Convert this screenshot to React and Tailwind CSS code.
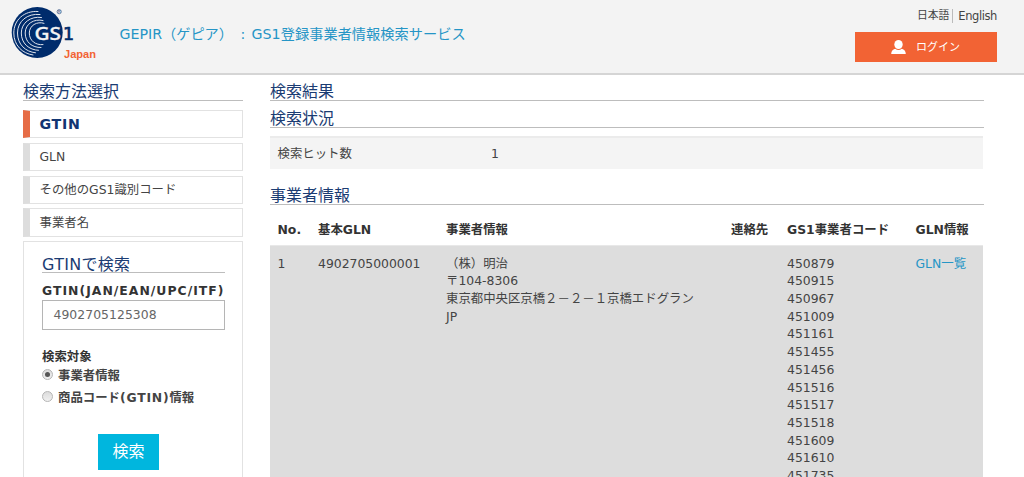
const menu = ["GTIN", "GLN", "その他のGS1識別コード", "事業者名"];

const codes = [
  "450879", "450915", "450967", "451009", "451161", "451455", "451456",
  "451516", "451517", "451518", "451609", "451610", "451735",
];

const columns =
  "grid grid-cols-[40.5px_128px_285px_56px_128.5px_1fr] pl-[7.5px]";

function Logo() {
  return (
    <svg className="mt-[5px] ml-[10px] h-[58px] w-[90px] shrink-0" viewBox="10 5 90 58">
      <circle cx="37.2" cy="32.5" r="25.5" fill="#002c6c" />
      <g fill="none" stroke="#dfe4ec" strokeWidth="1" strokeLinecap="round">
        <path d="M38 11.5C24 10.500 13.800 20 13.800 33C13.800 45 22 53.500 33 55" />
        <path d="M40 14.500C27 13 17.500 21.500 17.500 33C17.500 44.500 25.500 51.800 35.500 52.800" />
        <path d="M41.500 17.500C30.500 15.800 21.300 23 21.300 33C21.300 43.500 29 50 38.500 50.300" />
        <path d="M43 20.500C34 18.300 25.200 24 25.200 33C25.200 42 32 47.800 41 47.500" />
        <path d="M44 23.300C37 21 29.300 25.500 29.300 33C29.300 40.500 35.500 45.500 43 44.600" />
      </g>
      <path d="M37 25.500h22v15H35.500z" fill="#002c6c" />
      <text x="34.5" y="39.5" fontFamily="'Noto Sans', sans-serif" fontSize="18.5" fontWeight="500" fill="#f3f3f3" stroke="#f3f3f3" strokeWidth="0.3" textLength="26.5" lengthAdjust="spacingAndGlyphs">GS</text>
      <text x="63" y="39.5" fontFamily="'DejaVu Sans', sans-serif" fontSize="17.5" fill="#002c6c" stroke="#002c6c" strokeWidth="0.7">1</text>
      <circle cx="59.2" cy="11.7" r="2.1" fill="none" stroke="#5a7399" strokeWidth="0.9" />
      <text x="59.2" y="13" textAnchor="middle" fontFamily="'Liberation Sans', sans-serif" fontSize="3.5" fill="#002c6c">R</text>
      <text x="64" y="57.6" fontFamily="'Liberation Sans', sans-serif" fontSize="11" fontWeight="700" fill="#f26334" textLength="32" lengthAdjust="spacingAndGlyphs">Japan</text>
    </svg>
  );
}

function Heading({ children, className }) {
  return (
    <h2 className={`border-b border-[#bdbdbd] text-[16px] text-[#1b3c73] ${className}`}>
      {children}
    </h2>
  );
}

function Radio({ checked }) {
  return (
    <span className="mr-[5px] mb-[4px] flex size-[11px] items-center justify-center rounded-full border border-[#b5b5b5] bg-linear-to-b from-[#dcdcdc] to-[#f0f0f0]">
      {checked && <span className="size-[5px] rounded-full bg-[#555]" />}
    </span>
  );
}

export default function App() {
  return (
    <div className="flex h-[477px] w-[1024px] flex-col overflow-hidden bg-white font-['DejaVu_Sans','Noto_Sans_CJK_JP',sans-serif] text-[12.4px] text-[#444]">
      <header className="flex h-[75px] shrink-0 items-start border-b-2 border-[#d5d5d5] bg-[#f3f3f3]">
        <Logo />
        <h1 className="mt-[23px] ml-[19.5px] flex text-[14.2px] leading-[22px] whitespace-nowrap text-[#2595c6]">
          <span className="w-[116px]">GEPIR（ゲピア）</span>
          <span className="w-[16px] pl-[5px]">:</span>
          <span className="tracking-[0.05px]">GS1登録事業者情報検索サービス</span>
        </h1>
        <div className="mt-[9px] mr-[27px] ml-auto w-[142px]">
          <div className="flex h-[14px] items-center justify-end text-[10.8px] leading-[14px] whitespace-nowrap">
            <span className="mr-[3px]">日本語</span>
            <span className="border-l border-[#bbb] pl-[5px] text-[11.5px] tracking-[-0.4px]">English</span>
          </div>
          <button className="mt-[9px] flex h-[30px] w-full items-center bg-[#f26334] pl-[36px] text-[11px] text-white">
            <svg className="mr-[10px] h-[14px] w-[15px]" viewBox="0 0 15 14" fill="white">
              <ellipse cx="7.5" cy="4.5" rx="4.2" ry="4.5" />
              <path d="M0.200 14C0.200 11 1.800 9.500 4.200 8.700Q7.500 11.300 10.800 8.700C13.200 9.500 14.800 11 14.800 14Z" />
            </svg>
            <span className="pt-[3px]">ログイン</span>
          </button>
        </div>
      </header>

      <div className="flex min-h-0 flex-1">
        <aside className="ml-[23px] flex w-[220px] shrink-0 flex-col">
          <Heading className="mt-[5px] h-[21px] leading-[24px]">検索方法選択</Heading>
          <ul className="mt-[9px] flex flex-col gap-[4.6px]">
            {menu.map((name, i) => (
              <li
                key={name}
                className={`flex h-[28.2px] items-center border border-l-[7px] pl-[9.5px] ${
                  i === 0
                    ? "border-y-[#e2e2e2] border-r-[#e2e2e2] border-l-[#e66c46] pt-px text-[14.2px] font-bold tracking-[0.7px] text-[#123572]"
                    : "border-[#e2e2e2] border-l-[#ddd] pt-px"
                }`}
              >
                {name}
              </li>
            ))}
          </ul>
          <form className="mt-[4px] flex-1 border border-b-0 border-[#e2e2e2] pr-[17px] pl-[18px]">
            <Heading className="mt-[11px] h-[20px] leading-[23px] tracking-[0.3px]">GTINで検索</Heading>
            <div className="mt-[9px] h-[18px] text-[12.4px] leading-[17px] font-bold tracking-[1.02px] whitespace-nowrap text-[#333]">GTIN(JAN/EAN/UPC/ITF)</div>
            <div className="flex h-[30px] items-center border border-[#b5b5b5] pt-[2px] pl-[10.5px] tracking-[0.05px] text-[#666]">4902705125308</div>
            <div className="mt-[17px] leading-[20px] font-bold text-[#333]">検索対象</div>
            <label className="-mt-px flex h-[20px] items-center pt-[2px] font-bold"><Radio checked />事業者情報</label>
            <label className="mt-px flex h-[21px] items-center pt-[2px] font-bold"><Radio /><span>商品コード<span className="tracking-[0.8px]">(GTIN)</span>情報</span></label>
            <button className="mt-[26px] ml-[56px] block h-[36px] w-[61px] bg-[#00b6de] pt-px text-[16px] text-white">検索</button>
          </form>
        </aside>

        <main className="ml-[27px] flex w-[714px] shrink-0 flex-col">
          <Heading className="mt-[5px] h-[21px] leading-[24px]">検索結果</Heading>
          <Heading className="mt-[6px] h-[21px] leading-[24px]">検索状況</Heading>
          <div className="mt-[8px] mr-px flex h-[33px] shrink-0 items-center border-t-2 border-[#ebebeb] bg-[#f4f4f4] pt-px pl-[7.5px]">
            <span className="w-[213.5px]">検索ヒット数</span>
            <span>1</span>
          </div>
          <Heading className="mt-[15px] h-[21px] leading-[24px]">事業者情報</Heading>
          <div className={`${columns} mt-[15px] h-[20px] shrink-0 leading-[20px] font-bold whitespace-nowrap text-[#333]`}>
            <span>No.</span>
            <span>基本GLN</span>
            <span>事業者情報</span>
            <span>連絡先</span>
            <span>GS1事業者コード</span>
            <span>GLN情報</span>
          </div>
          <div className={`${columns} mt-[5px] mr-px flex-1 border-t border-[#e8e8e8] bg-[#ddd] pt-[8.6px] leading-[17.7px] whitespace-nowrap`}>
            <span>1</span>
            <span>4902705000001</span>
            <div>
              <div>（株）明治</div>
              <div>〒104-8306</div>
              <div>東京都中央区京橋２－２－１京橋エドグラン</div>
              <div>JP</div>
            </div>
            <span />
            <div>
              {codes.map((code) => (
                <div key={code}>{code}</div>
              ))}
            </div>
            <a className="text-[#2595c6]">GLN一覧</a>
          </div>
        </main>
      </div>
    </div>
  );
}
